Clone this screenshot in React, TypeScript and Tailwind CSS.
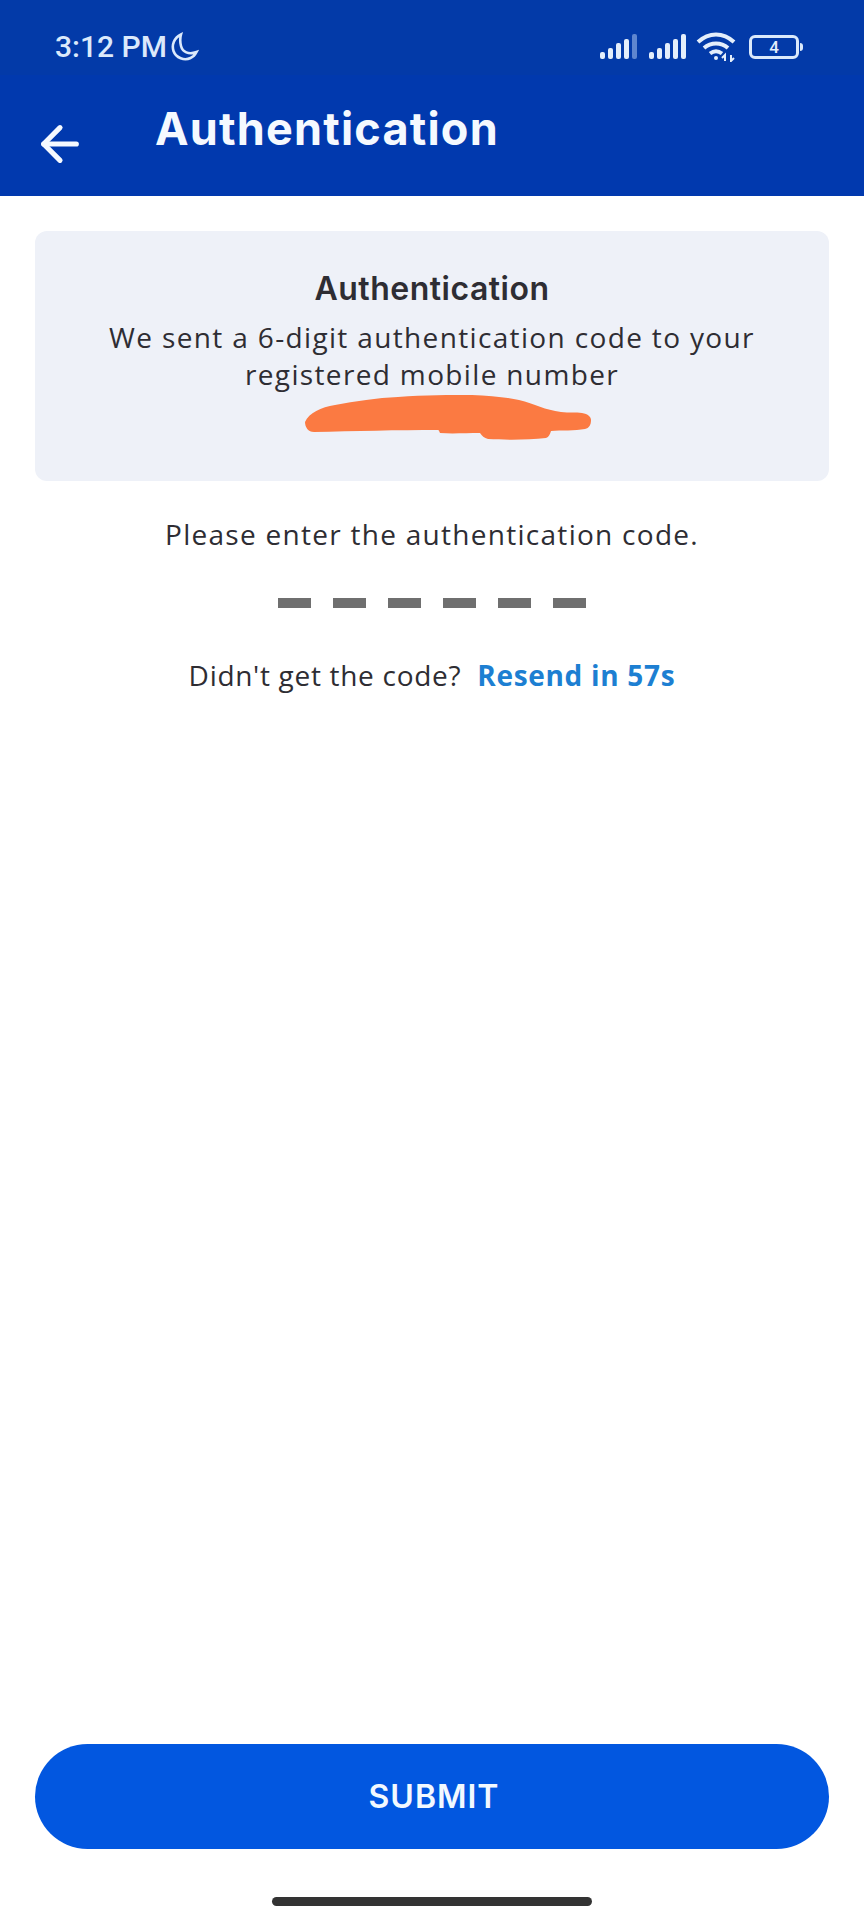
import React from "react";
import { ArrowLeft } from "lucide-react";

function Bars({ dim }: { dim?: boolean }) {
  return (
    <svg width="38" height="26" viewBox="0 0 38 26" className="block">
      <rect x="0" y="18" width="5" height="7" rx="2" fill="#e4eefb" />
      <rect x="8" y="14" width="5" height="11" rx="2" fill="#e4eefb" />
      <rect x="16" y="9" width="5" height="16" rx="2" fill="#e4eefb" />
      <rect x="24" y="5" width="5" height="20" rx="2" fill="#e4eefb" />
      <rect x="32" y="0" width="5" height="25" rx="2" fill={dim ? "#5f86cf" : "#e4eefb"} />
    </svg>
  );
}

export default function App() {
  const body = { fontFamily: '"Open Sans", sans-serif' };
  return (
    <div className="flex h-[1920px] w-[864px] flex-col overflow-hidden bg-white">
      <div className="flex h-[196px] flex-col bg-[#0139ae]">
        <div className="flex h-[75px] shrink-0 items-center justify-between bg-[#033aa8] pl-[55px] pr-[61px] pt-[19px]">
          <div className="flex items-center gap-[2px] text-[#dbe9fb]">
            <span className="text-[30px] font-medium leading-none" style={{ fontFamily: "Roboto, sans-serif" }}>3:12 PM</span>
            <svg width="30" height="30" viewBox="0 0 30 30" fill="none" stroke="#dbe9fb" strokeWidth="2.6">
              <path d="M12 2.5C5 6 2.5 13 4.5 19c2.5 7 11 10 17 7 2.500-1 4.500-3 6-6-8 3-14 0-15.500-6C11 10 11 6 12 2.500Z" />
            </svg>
          </div>
          <div className="flex items-center">
            <Bars dim />
            <div className="w-[11px]" />
            <Bars />
            <svg width="42" height="30" viewBox="0 0 42 30" fill="none" stroke="#e4eefb" strokeWidth="4" className="ml-[9px]">
              <path d="M2 10C13 0 27 0 38 10" />
              <path d="M8 16c7-6 17-6 24 0" />
              <path d="M14 21.500c4-3 8-3 12 0" />
              <circle cx="20" cy="26" r="2" fill="#e4eefb" stroke="none" />
              <path d="M29 29v-6l-3 3M35 23v6l3-3" strokeWidth="2" />
            </svg>
            <div className="ml-[11px] flex h-[24px] w-[50px] items-center justify-center rounded-[6px] border-[3px] border-[#dbe9fb] text-[17px] font-medium leading-none text-[#e4eefb]" style={{ fontFamily: "Roboto, sans-serif" }}>4</div>
            <div className="ml-[1px] h-[8px] w-[3px] rounded-r-sm bg-[#dbe9fb]" />
          </div>
        </div>
        <div className="flex flex-1 items-start pl-[32px]">
          <ArrowLeft size={56} color="#f5f9ff" strokeWidth={2.2} className="mt-[41px] shrink-0" />
          <h1 className="ml-[67px] mt-[31px] whitespace-nowrap text-[45px] font-bold leading-none tracking-[1.2px] text-[#f5f9ff]" style={{ fontFamily: "Inter, sans-serif" }}>Authentication</h1>
        </div>
      </div>

      <div className="flex flex-1 flex-col px-[35px]">
        <div className="mt-[35px] flex h-[250px] flex-col items-center rounded-[12px] bg-[#eef1f8] pt-[38px] text-center text-[#2e2d33]">
          <h2 className="text-[32px] font-semibold leading-[40px] tracking-[0.5px]" style={{ fontFamily: "Inter, sans-serif" }}>Authentication</h2>
          <p className="mt-[10px] text-[28px] leading-[37px] tracking-[1.35px]" style={body}>We sent a 6-digit authentication code to your<br />registered mobile number</p>
          <svg width="286" height="45" viewBox="0 0 286 45" className="ml-[32px] mt-[2px] block shrink-0">
            <path d="M0 27C4 18 16 12 30 10 50 6 72 3 93 2 120 0 145 0 167 0c18 1 34 2 47 5 16 4 26 10 42 12 8 1 15 0 21 1 6 1 9 4 9 7 0 5-2 8-6 9-10 2-24 1-34 2-1 3-2 6-5 7-18 2-40 2-58 1-4-1-6-3-8-6-14 0-28 1-40 0-1-2-1-3-2-3-40 0-84 1-124 2C3 37 0 32 0 27Z" fill="#fb7a42" />
          </svg>
        </div>

        <p className="mt-[33px] text-center text-[28px] leading-[40px] tracking-[1.28px] text-[#2e2d33]" style={body}>Please enter the authentication code.</p>

        <div className="mt-[44px] flex justify-center gap-[22px]">
          {[0, 1, 2, 3, 4, 5].map((i) => (
            <div key={i} className="h-[10px] w-[33px] bg-[#6f6f6f]" />
          ))}
        </div>

        <div className="mt-[47px] flex items-center justify-center gap-[16px] text-[28px] leading-[40px] tracking-[0.7px]" style={body}>
          <span className="text-[#2e2d33]">Didn't get the code?</span>
          <span className="font-bold text-[#1d7fd2]">Resend in 57s</span>
        </div>

        <div className="flex-1" />

        <button className="flex h-[105px] shrink-0 items-center justify-center rounded-full bg-[#0257e0] pl-[4px] text-[32px] font-semibold tracking-[1px] text-[#f2f9ff]" style={{ fontFamily: "Inter, sans-serif" }}>SUBMIT</button>

        <div className="mb-[14px] mt-[48px] h-[9px] w-[320px] self-center rounded-full bg-[#333]" />
      </div>
    </div>
  );
}
